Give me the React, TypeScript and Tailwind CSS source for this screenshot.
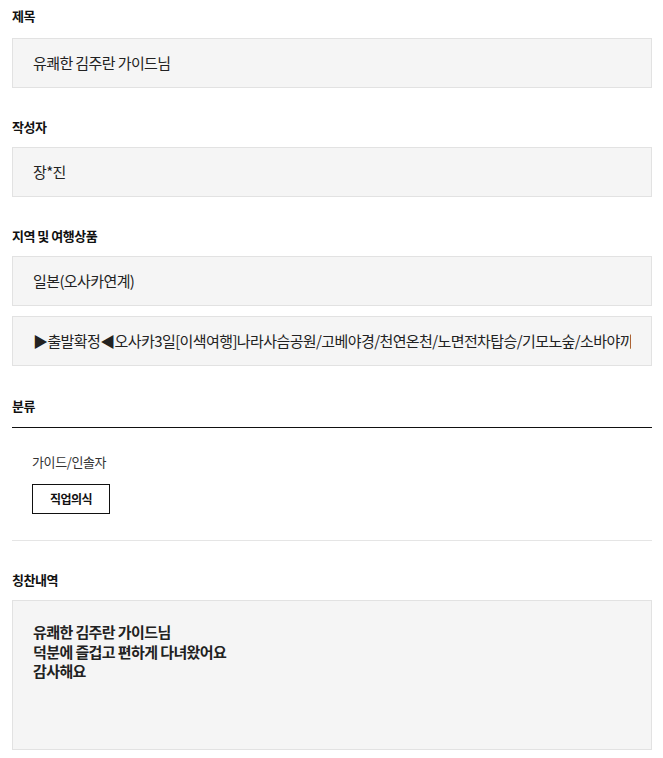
const font = "font-['Noto_Sans_CJK_KR','Noto_Sans',sans-serif]";

function Label({ children }: { children: React.ReactNode }) {
  return (
    <div className="text-[13px] font-bold leading-5 tracking-[-0.5px] text-[#111]">{children}</div>
  );
}

function Field({ children }: { children: React.ReactNode }) {
  return (
    <div className="h-[50px] flex items-center px-5 bg-[#f5f5f5] border border-[#e2e2e2] overflow-hidden">
      <span className="text-[15px] tracking-[-0.04em] text-[#222] whitespace-nowrap overflow-hidden">{children}</span>
    </div>
  );
}

export default function App() {
  return (
    <div className={`${font} w-[663px] pl-3 pr-[11px] pt-[6px] bg-white text-[#222]`}>
      <section>
        <Label>제목</Label>
        <div className="mt-3">
          <Field>유쾌한 김주란 가이드님</Field>
        </div>
      </section>

      <section className="mt-[29px]">
        <Label>작성자</Label>
        <div className="mt-2.5">
          <Field>장*진</Field>
        </div>
      </section>

      <section className="mt-[29px]">
        <Label>지역 및 여행상품</Label>
        <div className="mt-2.5 flex flex-col gap-2.5">
          <Field>일본(오사카연계)</Field>
          <Field>▶출발확정◀오사카3일[이색여행]나라사슴공원/고베야경/천연온천/노면전차탑승/기모노숲/소바야끼체험</Field>
        </div>
      </section>

      <section className="mt-[30px]">
        <Label>분류</Label>
        <div className="mt-[11px] border-t border-[#111]" />
        <div className="px-5 pt-6 pb-[26px] border-b border-[#e5e5e5]">
          <div className="text-[13px] tracking-[-0.03em] leading-5 text-[#333]">가이드/인솔자</div>
          <div className="mt-3 inline-flex items-center justify-center w-[78px] h-[30px] border border-[#111] text-[12px] font-bold tracking-[-0.5px] text-[#111]">
            직업의식
          </div>
        </div>
      </section>

      <section className="mt-[29px]">
        <Label>칭찬내역</Label>
        <div className="mt-2.5 h-[150px] px-5 pt-[21px] bg-[#f5f5f5] border border-[#e2e2e2]">
          <p className="text-[15px] font-bold tracking-[-0.04em] leading-[19.5px] text-[#222]">
            유쾌한 김주란 가이드님
            <br />
            덕분에 즐겁고 편하게 다녀왔어요
            <br />
            감사해요
          </p>
        </div>
      </section>
    </div>
  );
}
